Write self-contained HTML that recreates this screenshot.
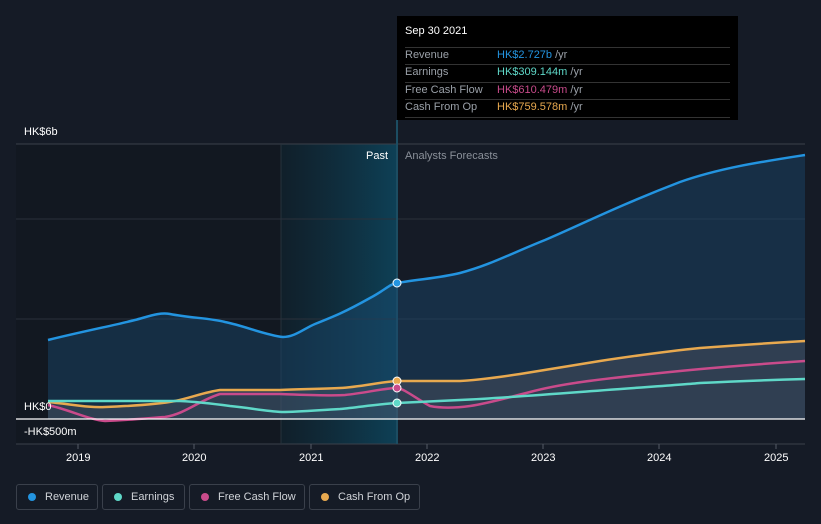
<!DOCTYPE html><html><head><style>
body{margin:0;width:821px;height:524px;background:#151b26;font-family:"Liberation Sans",sans-serif;overflow:hidden;position:relative}
.t{position:absolute;font-size:11px;color:#fff}
.leg{position:absolute;top:484px;height:26px;border:1px solid #3a404b;border-radius:3px;box-sizing:border-box;color:#d0d3d8;font-size:11px;line-height:24px}
.leg i{position:absolute;left:11px;top:8px;width:8px;height:8px;border-radius:50%}
.leg span{position:absolute;left:28px}
.tip{position:absolute;left:397px;top:16px;width:341px;height:104px;background:#000}
.tip div{position:absolute;font-size:11px;color:#9aa0a8}
.tip hr{position:absolute;left:8px;width:325px;margin:0;border:0;border-top:1px solid #333}
</style></head><body>
<svg width="821" height="524" style="position:absolute;left:0;top:0">
<defs>
<linearGradient id="pg" x1="0" x2="1"><stop offset="0" stop-color="#0f2430" stop-opacity=".6"/><stop offset="1" stop-color="#0d4a63" stop-opacity=".8"/></linearGradient>
</defs>
<rect x="16" y="144" width="381" height="300" fill="#121821"/>
<rect x="281" y="144" width="116" height="300" fill="url(#pg)"/>
<line x1="16" y1="144" x2="805" y2="144" stroke="#3a404a"/>
<line x1="16" y1="219" x2="805" y2="219" stroke="#2b313b"/>
<line x1="16" y1="319" x2="805" y2="319" stroke="#2b313b"/>
<line x1="16" y1="444" x2="805" y2="444" stroke="#3a404a"/>
<line x1="281" y1="144" x2="281" y2="444" stroke="#25323c"/>
<line x1="397" y1="120" x2="397" y2="444" stroke="#1c4d62" stroke-width="2"/>
<path d="M48,340 C80,332 120,324 135,320 C150,316 160,312 170,314 C190,318 210,318 225,322 C245,326 265,335 283,337 C295,337 305,328 315,324 C335,316 345,312 370,298 C385,290 390,284 397,283 C420,279 440,278 460,273 C490,265 510,254 545,240 C580,225 620,205 680,182 C720,168 760,162 805,155 L805,419 L48,419Z" fill="#1a4a6e" fill-opacity=".45"/>
<path d="M48,402 C70,404 90,408 105,407 C130,406 160,404 175,401 C190,398 205,392 220,390 L280,390 C300,389 320,389 340,388 C360,387 380,382 397,381 L460,381 C480,380 500,377 520,374 C550,369 570,366 600,361 C640,355 680,350 700,348 C740,345 770,343 805,341 L805,419 L48,419Z" fill="#6a6870" fill-opacity=".3"/>
<path d="M48,340 C80,332 120,324 135,320 C150,316 160,312 170,314 C190,318 210,318 225,322 C245,326 265,335 283,337 C295,337 305,328 315,324 C335,316 345,312 370,298 C385,290 390,284 397,283 C420,279 440,278 460,273 C490,265 510,254 545,240 C580,225 620,205 680,182 C720,168 760,162 805,155" fill="none" stroke="#2394e0" stroke-width="2.5"/>
<path d="M48,402 C70,404 90,408 105,407 C130,406 160,404 175,401 C190,398 205,392 220,390 L280,390 C300,389 320,389 340,388 C360,387 380,382 397,381 L460,381 C480,380 500,377 520,374 C550,369 570,366 600,361 C640,355 680,350 700,348 C740,345 770,343 805,341" fill="none" stroke="#e8a94f" stroke-width="2.5"/>
<path d="M48,405 C70,410 90,420 105,421 C130,420 150,418 165,417 C185,414 200,400 220,394 L280,394 C310,395 330,396 345,395 C365,393 385,388 397,388 C405,389 415,398 430,406 C440,408 455,408 470,406 C490,403 510,397 530,392 C560,384 590,380 680,371 C720,367 760,364 805,361" fill="none" stroke="#c94b8b" stroke-width="2.5"/>
<path d="M48,401 L180,401 C200,402 215,404 230,406 C250,408 265,411 282,412 C300,412 320,410 340,409 C360,407 380,404 397,403 C420,402 440,401 460,400 C500,398 540,395 580,392 C630,388 680,385 700,383 C740,381 770,380 805,379" fill="none" stroke="#5fd8c8" stroke-width="2.5"/>
<line x1="16" y1="419" x2="805" y2="419" stroke="#fff" stroke-width="1.2"/>
<circle cx="397" cy="283" r="4" fill="#2394e0" stroke="#fff"/>
<circle cx="397" cy="381" r="4" fill="#e8a94f" stroke="#fff"/>
<circle cx="397" cy="388" r="4" fill="#c94b8b" stroke="#fff"/>
<circle cx="397" cy="403" r="4" fill="#5fd8c8" stroke="#fff"/>
<g stroke="#555b66"><line x1="78" y1="444" x2="78" y2="449"/><line x1="194" y1="444" x2="194" y2="449"/><line x1="311" y1="444" x2="311" y2="449"/><line x1="427" y1="444" x2="427" y2="449"/><line x1="543" y1="444" x2="543" y2="449"/><line x1="659" y1="444" x2="659" y2="449"/><line x1="776" y1="444" x2="776" y2="449"/></g>
</svg>
<div class="t" style="left:24px;top:126px">HK$6b</div>
<div class="t" style="left:24px;top:401px">HK$0</div>
<div class="t" style="left:24px;top:426px">-HK$500m</div>
<div class="t" style="left:366px;top:150px">Past</div>
<div class="t" style="left:405px;top:150px;color:#8a9099">Analysts Forecasts</div>
<div class="t" style="left:66px;top:452px">2019</div>
<div class="t" style="left:182px;top:452px">2020</div>
<div class="t" style="left:299px;top:452px">2021</div>
<div class="t" style="left:415px;top:452px">2022</div>
<div class="t" style="left:531px;top:452px">2023</div>
<div class="t" style="left:647px;top:452px">2024</div>
<div class="t" style="left:764px;top:452px">2025</div>
<div class="tip">
<div style="left:8px;top:9px;color:#fff">Sep 30 2021</div>
<hr style="top:31px"><hr style="top:48px"><hr style="top:66px"><hr style="top:83px"><hr style="top:101px">
<div style="left:8px;top:33px">Revenue</div><div style="left:100px;top:33px"><span style="color:#2394e0">HK$2.727b</span> /yr</div>
<div style="left:8px;top:50px">Earnings</div><div style="left:100px;top:50px"><span style="color:#5fd8c8">HK$309.144m</span> /yr</div>
<div style="left:8px;top:68px">Free Cash Flow</div><div style="left:100px;top:68px"><span style="color:#c94b8b">HK$610.479m</span> /yr</div>
<div style="left:8px;top:85px">Cash From Op</div><div style="left:100px;top:85px"><span style="color:#e8a94f">HK$759.578m</span> /yr</div>
</div>
<div class="leg" style="left:16px;width:82px"><i style="background:#2394e0"></i><span>Revenue</span></div>
<div class="leg" style="left:102px;width:83px"><i style="background:#5fd8c8"></i><span>Earnings</span></div>
<div class="leg" style="left:189px;width:116px"><i style="background:#c94b8b"></i><span>Free Cash Flow</span></div>
<div class="leg" style="left:309px;width:111px"><i style="background:#e8a94f"></i><span>Cash From Op</span></div>
</body></html>
